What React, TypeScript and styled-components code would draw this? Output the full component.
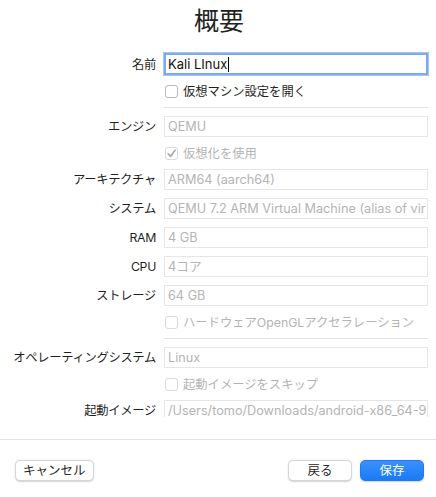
import React from 'react'
import styled, { createGlobalStyle } from 'styled-components'

const GlobalStyle = createGlobalStyle`
    html, body {
        margin: 0;
        padding: 0;
        background: #ffffff;
    }
    body {
        font-family: "Inter", "Noto Sans CJK JP", sans-serif;
        color: #262626;
    }
`;

interface FieldRow {
    kind: 'field';
    label: string;
    value: string;
}

interface CheckRow {
    kind: 'check';
    label: string;
    checked?: boolean;
    disabled?: boolean;
}

interface DividerRow {
    kind: 'divider';
}

type Row = FieldRow | CheckRow | DividerRow;

// values trimmed to what the field shows
const rows: Row[] = [
    { kind: 'check', label: '仮想マシン設定を開く' },
    { kind: 'divider' },
    { kind: 'field', label: 'エンジン', value: 'QEMU' },
    { kind: 'check', label: '仮想化を使用', checked: true, disabled: true },
    { kind: 'field', label: 'アーキテクチャ', value: 'ARM64 (aarch64)' },
    { kind: 'field', label: 'システム', value: 'QEMU 7.2 ARM Virtual Machine (alias of vir' },
    { kind: 'field', label: 'RAM', value: '4 GB' },
    { kind: 'field', label: 'CPU', value: '4コア' },
    { kind: 'field', label: 'ストレージ', value: '64 GB' },
    { kind: 'check', label: 'ハードウェアOpenGLアクセラレーション', disabled: true },
    { kind: 'divider' },
    { kind: 'field', label: 'オペレーティングシステム', value: 'Linux' },
    { kind: 'check', label: '起動イメージをスキップ', disabled: true },
    { kind: 'field', label: '起動イメージ', value: '/Users/tomo/Downloads/android-x86_64-9' },
];

export default function App() {
    return (
        <Window>
            <GlobalStyle />
            <Title>概要</Title>
            <Scroll>
                <Form>
                    <Label>名前</Label>
                    <NameInput>
                        Kali LInux<Caret />
                    </NameInput>
                    {rows.map((row, i) => {
                        if (row.kind === 'divider') return <Divider key={i} />;
                        if (row.kind === 'check') {
                            return (
                                <CheckLine key={i} $disabled={row.disabled}>
                                    <Box $disabled={row.disabled}>
                                        {row.checked && (
                                            <svg width="11" height="11" viewBox="0 0 10 10">
                                                <path d="M2 5.3 L4.1 7.7 L8.3 2.1" fill="none" stroke="#a9a9a9" strokeWidth="1.5" strokeLinecap="round" strokeLinejoin="round" />
                                            </svg>
                                        )}
                                    </Box>
                                    {row.label}
                                </CheckLine>
                            );
                        }
                        return (
                            <React.Fragment key={i}>
                                <Label>{row.label}</Label>
                                <Field>{row.value}</Field>
                            </React.Fragment>
                        );
                    })}
                </Form>
            </Scroll>
            <Footer>
                <Button>キャンセル</Button>
                <Push />
                <Button $wide>戻る</Button>
                <Button $wide $primary>保存</Button>
            </Footer>
        </Window>
    )
}

const Window = styled.div`
    width: 436px;
    height: 497px;
    display: flex;
    flex-direction: column;
    overflow: hidden;
`;

const Title = styled.h1`
    margin: 0;
    padding-top: 6px;
    height: 30px;
    line-height: 30px;
    font-size: 25px;
    font-weight: 400;
    text-align: center;
    color: #222;
    padding-left: 2px;
`;

const Scroll = styled.div`
    height: 381px;
    flex-shrink: 0;
    overflow: hidden;
    padding-top: 17px;
    box-sizing: border-box;
`;

const Form = styled.div`
    display: grid;
    grid-template-columns: 156px 1fr;
    column-gap: 8px;
    row-gap: 8px;
    padding-right: 8px;
    align-items: center;
`;

const Label = styled.div`
    grid-column: 1;
    text-align: right;
    font-size: 12.3px;
    line-height: 21px;
    color: #1f1f1f;
    white-space: nowrap;
    letter-spacing: -0.3px;
`;

const Field = styled.div`
    grid-column: 2;
    height: 21px;
    box-sizing: border-box;
    border: 1px solid #e6e6e6;
    padding: 0 0 0 3px;
    font-size: 12.7px;
    line-height: 19px;
    color: #b4b4b4;
    white-space: nowrap;
    overflow: hidden;
    min-width: 0;
`;

const NameInput = styled(Field)`
    height: 22px;
    border: 2px solid #80a8ee;
    box-shadow: 0 0 0 1px #aac6f5;
    padding: 0 2px;
    line-height: 18px;
    font-size: 13px;
    color: #111;
    display: flex;
    align-items: center;
`;

const Caret = styled.span`
    display: inline-block;
    width: 1px;
    height: 15px;
    background: #000;
    margin-left: 1px;
`;

const CheckLine = styled.div<{ $disabled?: boolean }>`
    grid-column: 2;
    height: 16px;
    display: flex;
    align-items: center;
    gap: 5px;
    padding-left: 1px;
    font-size: 12.3px;
    color: ${p => (p.$disabled ? '#b4b4b4' : '#1f1f1f')};
    white-space: nowrap;
`;

const Box = styled.span<{ $disabled?: boolean }>`
    width: 13px;
    height: 13px;
    box-sizing: border-box;
    border: 1px solid ${p => (p.$disabled ? '#dadada' : '#b8b8b8')};
    border-radius: 3px;
    background: #fff;
    display: flex;
    align-items: center;
    justify-content: center;
    flex-shrink: 0;
`;

const Divider = styled.div`
    grid-column: 2;
    height: 1px;
    background: #e4e4e4;
`;

const Footer = styled.div`
    margin-top: auto;
    height: 58px;
    box-sizing: border-box;
    border-top: 1px solid #e2e2e2;
    display: flex;
    align-items: flex-start;
    gap: 8px;
    padding: 20px 12px 0 15px;
`;

const Push = styled.div`
    flex: 1;
`;

const Button = styled.button<{ $primary?: boolean; $wide?: boolean }>`
    height: 21px;
    min-width: ${p => (p.$wide ? '64px' : '0')};
    padding: 0 ${p => (p.$wide ? '0' : '7px')};
    border-radius: 5px;
    font-family: "Inter", "Noto Sans CJK JP", sans-serif;
    font-size: 12.5px;
    line-height: 19px;
    color: ${p => (p.$primary ? '#fff' : '#262626')};
    background: ${p => (p.$primary ? 'linear-gradient(#3a91fb, #1a7af5)' : '#fff')};
    border: 1px solid ${p => (p.$primary ? '#1b7cf5' : '#d6d6d6')};
    box-shadow: 0 0.5px 1.5px rgba(0, 0, 0, 0.18);
    cursor: default;
`;
